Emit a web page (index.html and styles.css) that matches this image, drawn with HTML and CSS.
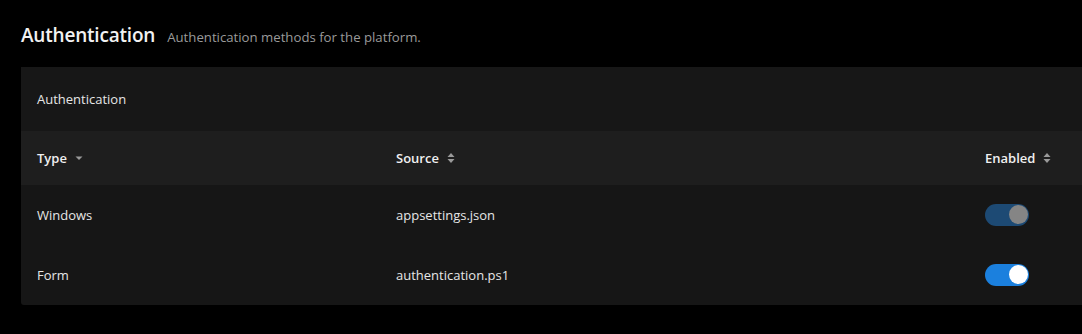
FILE: index.html
```html
<!DOCTYPE html>
<html>
<head>
<meta charset="utf-8">
<link rel="stylesheet" href="styles.css">
</head>
<body>
<div class="page">
  <div class="heading">
    <h1 class="title">Authentication</h1>
    <span class="subtitle">Authentication methods for the platform.</span>
  </div>
  <div class="card">
    <div class="card-title">Authentication</div>
    <div class="row head">
      <div class="cell c-type">Type <svg class="ico" width="10" height="10" viewBox="0 0 10 10"><path d="M1.5 3.5h7l-3.5 3.5z" fill="#9a9a9a"/></svg></div>
      <div class="cell c-src">Source <svg class="ico" width="10" height="12" viewBox="0 0 10 12"><path d="M1.5 5h7L5 1z M1.5 7h7L5 11z" fill="#9a9a9a"/></svg></div>
      <div class="cell c-en">Enabled <svg class="ico" width="10" height="12" viewBox="0 0 10 12"><path d="M1.5 5h7L5 1z M1.5 7h7L5 11z" fill="#9a9a9a"/></svg></div>
    </div>
    <div class="row">
      <div class="cell c-type">Windows</div>
      <div class="cell c-src">appsettings.json</div>
      <div class="cell c-en"><span class="toggle dim"><span class="knob"></span></span></div>
    </div>
    <div class="row">
      <div class="cell c-type">Form</div>
      <div class="cell c-src">authentication.ps1</div>
      <div class="cell c-en"><span class="toggle on"><span class="knob"></span></span></div>
    </div>
  </div>
</div>
</body>
</html>
```
FILE: styles.css
```css
html, body {
  margin: 0;
  padding: 0;
  background: #000;
  overflow: hidden;
}
body {
  font-family: "Open Sans", "Noto Sans", sans-serif;
  color: #e6e6e6;
  width: 1082px;
  height: 334px;
}
.page {
  padding: 22px 0 0 21px;
}
.heading {
  display: flex;
  align-items: baseline;
  gap: 12px;
  height: 45px;
}
.title {
  margin: 0;
  font-size: 19px;
  font-weight: 600;
  color: #f2f2f2;
  letter-spacing: -0.2px;
}
.subtitle {
  font-size: 13.2px;
  color: #9a9a9a;
}
.card {
  width: 1100px;
  background: #161616;
  border-radius: 3px;
}
.card-title {
  height: 64px;
  display: flex;
  align-items: center;
  padding-left: 16px;
  font-size: 13px;
  color: #e6e6e6;
  background: #171717;
}
.row {
  display: flex;
  align-items: center;
  height: 60px;
  font-size: 13px;
}
.row.head {
  height: 54px;
  background: #1e1e1e;
  font-weight: 600;
  color: #f0f0f0;
}
.cell {
  display: flex;
  align-items: center;
  gap: 7px;
}
.c-type { width: 359px; padding-left: 16px; }
.c-src { width: 589px; }
.c-en { flex: 1; }
.ico { display: block; }
.toggle {
  display: flex;
  align-items: center;
  width: 44px;
  height: 22px;
  margin-top: -1px;
  border-radius: 11px;
  box-sizing: border-box;
  padding: 0 1.5px;
  justify-content: flex-end;
}
.toggle .knob {
  width: 19px;
  height: 19px;
  border-radius: 50%;
}
.toggle.dim { background: #1d4a74; }
.toggle.dim .knob { background: #858585; }
.toggle.on { background: #1b80de; }
.toggle.on .knob { background: #ffffff; }
```
